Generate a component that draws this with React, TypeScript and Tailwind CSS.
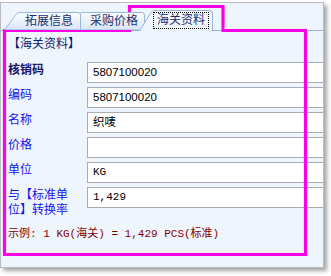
import React from 'react';

const CJK = '"Liberation Sans", "Noto Sans CJK SC", sans-serif';
const MONO = '"Liberation Mono", "Noto Sans CJK SC", monospace';

type TabProps = {
  label: string;
  width: number;
  active?: boolean;
  className?: string;
  textClass: string;
};

function Tab({ label, width, active, className, textClass }: TabProps) {
  const h = active ? 21 : 18;
  const w = width;
  const d = active
    ? `M0.5,${h} L12,2.5 Q13.5,0.5 16,0.5 L${w - 3},0.5 Q${w - 0.5},0.5 ${w - 0.5},3 L${w - 0.5},${h}`
    : `M0.5,${h} L12,2.5 Q13.5,0.5 16,0.5 L${w - 3},0.5 Q${w - 0.5},0.5 ${w - 0.5},3 L${w - 0.5},${h} Z`;
  const gid = `g-${label}`;
  return (
    <div className={`relative shrink-0 ${className ?? ''}`} style={{ width: w, height: h }}>
      <svg className="absolute inset-0" width={w} height={h} viewBox={`0 0 ${w} ${h}`}>
        <defs>
          <linearGradient id={gid} x1="0" y1="0" x2="0" y2="1">
            <stop offset="0" stopColor={active ? '#f7faff' : '#fdfeff'} />
            <stop offset="1" stopColor={active ? '#eef4fc' : '#d8e4f4'} />
          </linearGradient>
        </defs>
        <path d={d} fill={`url(#${gid})`} stroke="#98b5de" strokeWidth="1" />
      </svg>
      <div className={`relative flex h-full items-center ${textClass}`}>
        <span
          className={`text-[12px] leading-[15px] text-[#1b2d6c] ${active ? 'border border-dotted border-black px-[3px]' : ''}`}
          style={{ fontFamily: CJK }}
        >
          {label}
        </span>
      </div>
    </div>
  );
}

function Row({ label, value, bold, mono, twoLine }: { label: React.ReactNode; value: string; bold?: boolean; mono?: boolean; twoLine?: boolean }) {
  return (
    <div className="flex items-start">
      <div
        className={`w-[79px] shrink-0 pt-[1px] text-[12px] leading-[15px] ${bold ? 'font-bold text-[#17176a]' : 'text-[#1414f0]'} ${twoLine ? 'pr-[8px]' : ''}`}
        style={{ fontFamily: CJK }}
      >
        {label}
      </div>
      <div
        className="h-[21px] w-[260px] shrink-0 border border-[#a8acb2] bg-white pl-[5px] leading-[19px] text-black"
        style={{ fontFamily: mono ? MONO : CJK, fontSize: mono ? 11 : 11.5 }}
      >
        {value}
      </div>
    </div>
  );
}

export default function App() {
  return (
    <div className="relative h-[276px] w-[331px] overflow-hidden bg-white pt-[2px]">
      <div className="h-[266px] w-[324px] overflow-hidden border border-[#b9bdc2] bg-[#eff5fd] shadow-[3px_3px_4px_rgba(0,0,0,0.35)]">
        {/* tab strip */}
        <div className="flex h-[28px] items-end border-b border-[#93b3df] pl-[3px]">
          <Tab label="拓展信息" width={77} className="z-20" textClass="pl-[21px]" />
          <Tab label="采购价格" width={78} className="z-10 -ml-[14px]" textClass="pl-[23px]" />
          <Tab label="海关资料" width={74} active className="z-30 -mb-[1px] -ml-[6px]" textClass="pl-[14px]" />
        </div>

        <div className="pl-[7px]">
          <div className="mt-[5px] text-[12px] leading-[16px] text-[#0d176c]" style={{ fontFamily: CJK }}>
            【海关资料】
          </div>

          <div className="mt-[10px] flex flex-col gap-[4px]">
            <Row label="核销码" value="5807100020" bold />
            <Row label="编码" value="5807100020" />
            <Row label="名称" value="织唛" />
            <Row label="价格" value="" />
            <Row label="单位" value="KG" mono />
            <Row label={<>与【标准单<br />位】转换率</>} value="1,429" mono twoLine />
          </div>

          <div className="mt-[8px] text-[11px] leading-[16px] text-[#850000]" style={{ fontFamily: MONO }}>
            示例: 1 KG(海关) = 1,429 PCS(标准)
          </div>
        </div>
      </div>

      {/* highlight annotation */}
      <svg className="pointer-events-none absolute left-0 top-0" width="331" height="276" viewBox="0 0 331 276">
        <path
          d="M4.5,30.5 L129.5,30.5 L129.5,6.5 L223,6.5 L223,30.5 L305.5,30.5 L305.5,254.5 L4.5,254.5 Z"
          fill="none"
          stroke="#ff00e6"
          strokeWidth="3.2"
        />
      </svg>
    </div>
  );
}
